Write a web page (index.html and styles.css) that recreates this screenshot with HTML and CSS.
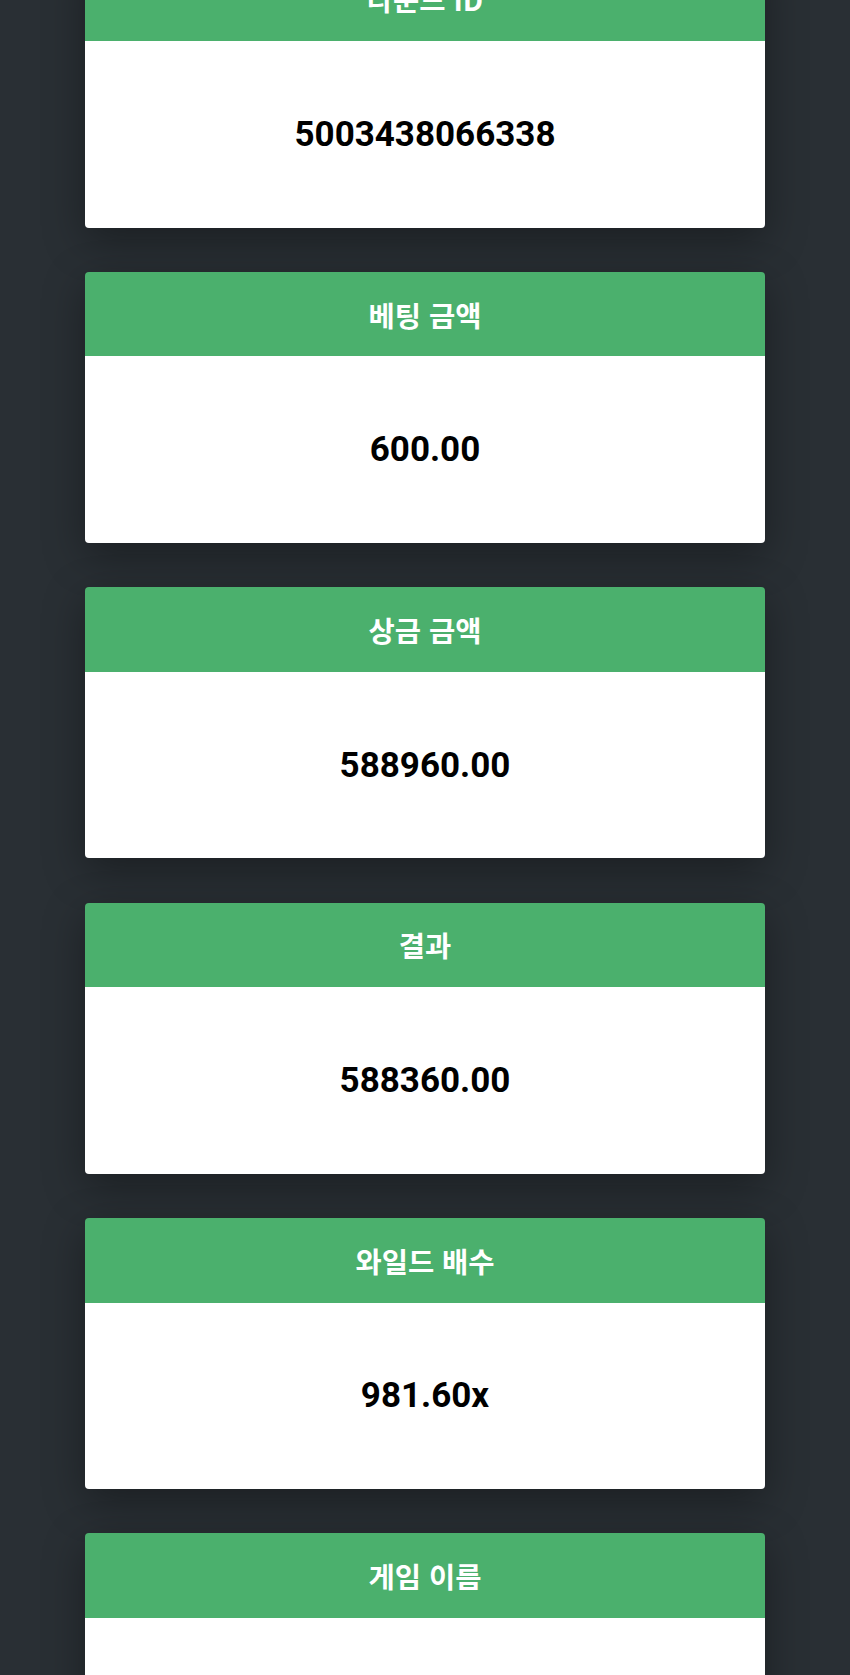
FILE: index.html
```html
<!DOCTYPE html>
<html lang="ko">
<head>
  <meta charset="UTF-8" />
  <meta name="viewport" content="width=device-width, initial-scale=1.0"/>
  <title>베팅 상세</title>
  <link rel="stylesheet" href="styles.css">
</head>
<body>
  <div class="detail-list">
    <div class="detail-card">
      <div class="detail-title">라운드 ID</div>
      <div class="detail-value">5003438066338</div>
    </div>

    <div class="detail-card">
      <div class="detail-title">베팅 금액</div>
      <div class="detail-value">600.00</div>
    </div>

    <div class="detail-card">
      <div class="detail-title">상금 금액</div>
      <div class="detail-value">588960.00</div>
    </div>

    <div class="detail-card">
      <div class="detail-title">결과</div>
      <div class="detail-value">588360.00</div>
    </div>

    <div class="detail-card">
      <div class="detail-title">와일드 배수</div>
      <div class="detail-value">981.60x</div>
    </div>

    <div class="detail-card">
      <div class="detail-title">게임 이름</div>
      <div class="detail-value">Sweet Bonanza</div>
    </div>
  </div>
</body>
</html>
```

FILE: styles.css
```css
body {
  margin: 0;
  background: #292f34;
  font-family: Roboto, "Noto Sans CJK KR", sans-serif;
  overflow: hidden;
}

.detail-list {
  width: 680px;
  margin: -43.5px auto 0;
  display: flex;
  flex-direction: column;
  gap: 44.4px;
}

.detail-card {
  border-radius: 4px;
  overflow: hidden;
  box-shadow: 0 12px 40px rgba(0, 0, 0, 0.35);
}

.detail-title {
  height: 84.5px;
  background-color: #4bb06d;
  color: #fff;
  font-family: "Noto Sans CJK KR", sans-serif;
  font-weight: 700;
  font-size: 28.5px;
  display: flex;
  align-items: center;
  justify-content: center;
}

.detail-value {
  height: 186.5px;
  background-color: #fff;
  color: #000;
  font-weight: 700;
  font-size: 35px;
  display: flex;
  align-items: center;
  justify-content: center;
}
```
